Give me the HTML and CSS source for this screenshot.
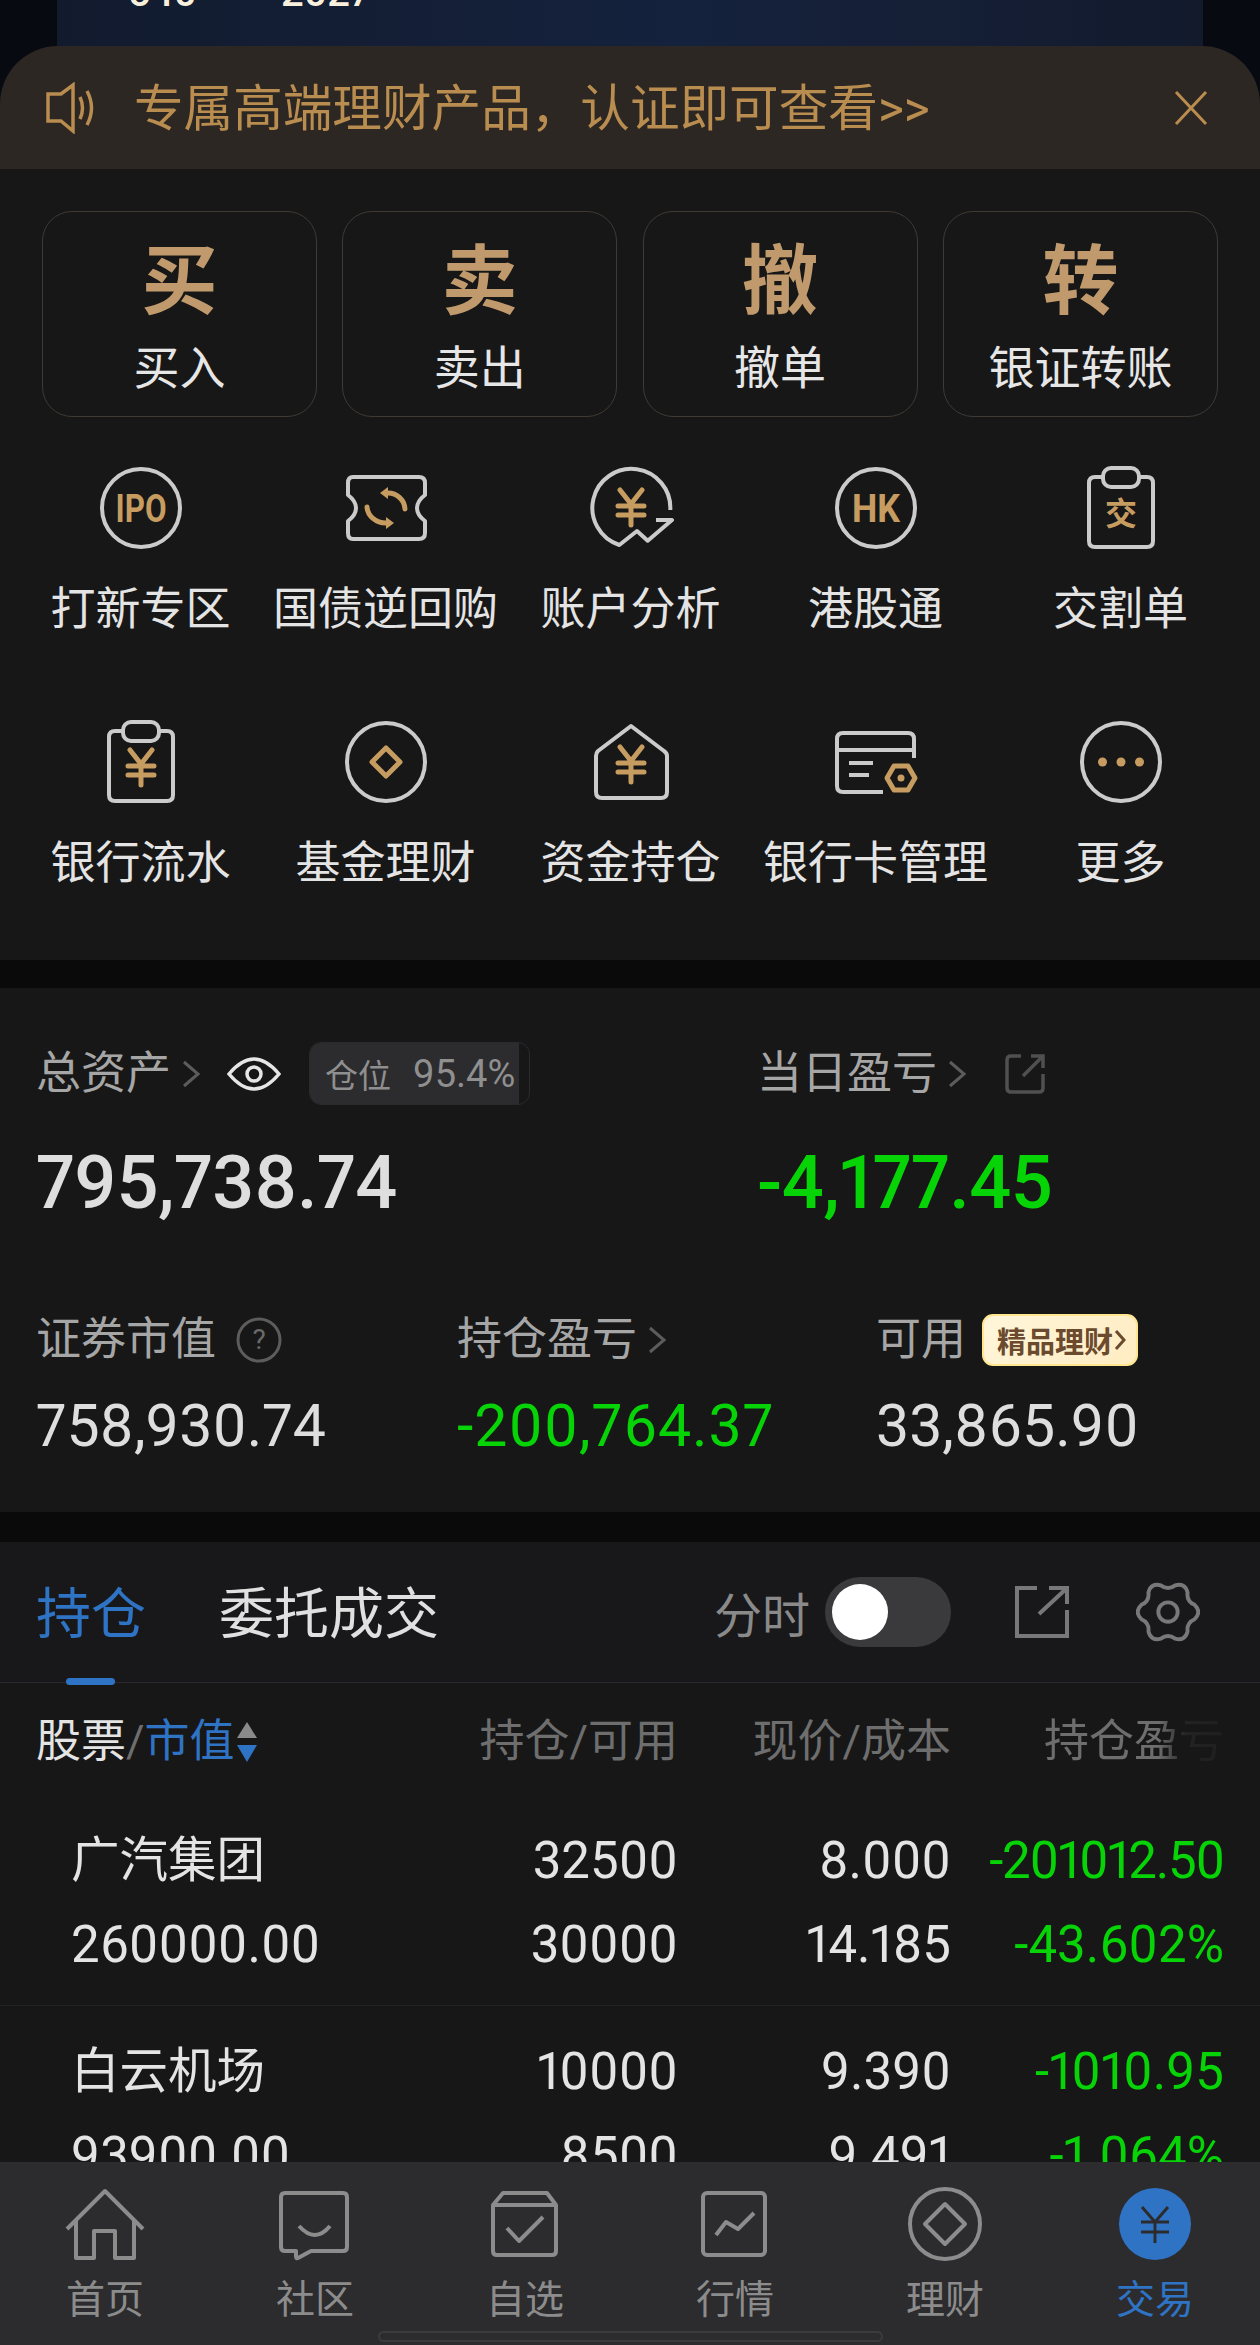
FILE: index.html
```html
<!DOCTYPE html>
<html lang="zh-CN">
<head>
    <meta charset="UTF-8">
    <meta name="viewport" content="width=device-width, initial-scale=1.0">
    <title>交易</title>
    <link rel="stylesheet" href="styles.css">
</head>
<body>
<div class="page">
    <!-- what is behind the sheet -->
    <div class="backdrop">
        <div class="backdrop-panel">
            <span class="backdrop-num">540</span>
            <span class="backdrop-num">2027</span>
        </div>
    </div>

    <div class="sheet">
        <div class="banner">
            <svg class="banner-speaker" viewBox="0 0 50 52"><path d="M2 12H15L27 3V49L15 39H2Z"/><path d="M34 15Q39 26 34 37"/><path d="M41 9Q50 26 41 43"/></svg>
            <span class="banner-text">专属高端理财产品，认证即可查看&gt;&gt;</span>
            <svg class="banner-close" viewBox="0 0 34 36"><path d="M2 2L32 34M32 2L2 34"/></svg>
        </div>

        <div class="trade-panel">
            <div class="action-row">
                <div class="action-card"><span class="action-glyph">买</span><span class="action-label">买入</span></div>
                <div class="action-card"><span class="action-glyph">卖</span><span class="action-label">卖出</span></div>
                <div class="action-card"><span class="action-glyph">撤</span><span class="action-label">撤单</span></div>
                <div class="action-card"><span class="action-glyph">转</span><span class="action-label">银证转账</span></div>
            </div>

            <div class="menu-grid">
                <div class="menu-item">
                    <svg class="menu-icon" viewBox="0 0 90 90"><circle class="line" cx="45" cy="45" r="39"/><text class="icon-text" x="45" y="59" textLength="51" lengthAdjust="spacingAndGlyphs">IPO</text></svg>
                    <span>打新专区</span>
                </div>
                <div class="menu-item">
                    <svg class="menu-icon" viewBox="0 0 90 90"><path class="line" d="M12 14H78Q84 14 84 20V32Q76 38 76 45T84 58V70Q84 76 78 76H12Q7 76 7 70V58Q15 52 15 45T7 32V20Q7 14 12 14Z"/><path class="gold" d="M47 30A17 17 0 0 1 64 46"/><path class="gold" d="M26 44A19 17 0 0 0 45 60"/><path class="gold-fill" d="M47 24V36L39 30ZM45 54V66L53 60Z"/></svg>
                    <span>国债逆回购</span>
                </div>
                <div class="menu-item">
                    <svg class="menu-icon" viewBox="0 0 90 90"><path class="line" d="M84.3 47A39 39 0 1 0 33.3 82L51 68L61.7 77.7L86 57H70"/><path class="gold" d="M34 27L45 41L56 27M45 41V62M32 43H58M32 52H58"/></svg>
                    <span>账户分析</span>
                </div>
                <div class="menu-item">
                    <svg class="menu-icon" viewBox="0 0 90 90"><circle class="line" cx="45" cy="45" r="39"/><text class="icon-text" x="45" y="59" textLength="48" lengthAdjust="spacingAndGlyphs">HK</text></svg>
                    <span>港股通</span>
                </div>
                <div class="menu-item">
                    <svg class="menu-icon" viewBox="0 0 90 90"><path class="line" d="M27 14H19Q13 14 13 20V78Q13 84 19 84H71Q77 84 77 78V20Q77 14 71 14H63"/><rect class="line" x="27" y="5" width="36" height="19" rx="8"/><text class="icon-text icon-cjk" x="45" y="62">交</text></svg>
                    <span>交割单</span>
                </div>
                <div class="menu-item">
                    <svg class="menu-icon" viewBox="0 0 90 90"><path class="line" d="M27 14H19Q13 14 13 20V78Q13 84 19 84H71Q77 84 77 78V20Q77 14 71 14H63"/><rect class="line" x="27" y="5" width="36" height="19" rx="8"/><path class="gold" d="M34 33L45 47L56 33M45 47V68M32 49H58M32 58H58"/></svg>
                    <span>银行流水</span>
                </div>
                <div class="menu-item">
                    <svg class="menu-icon" viewBox="0 0 90 90"><circle class="line" cx="45" cy="45" r="39"/><path class="gold" d="M45 31L59 45L45 59L31 45Z"/></svg>
                    <span>基金理财</span>
                </div>
                <div class="menu-item">
                    <svg class="menu-icon" viewBox="0 0 90 90"><path class="line" d="M45 9L12 34Q10 36 10 39V75Q10 81 16 81H75Q81 81 81 75V39Q81 36 78 34Z"/><path class="gold" d="M34 30L45 44L56 30M45 44V65M32 46H58M32 55H58"/></svg>
                    <span>资金持仓</span>
                </div>
                <div class="menu-item">
                    <svg class="menu-icon" viewBox="0 0 90 90"><path class="line" d="M83 41V22Q83 16 77 16H12Q6 16 6 22V69Q6 75 12 75H52M6 33H83M18 46H42M18 58H38"/><path class="gold" d="M63 49L77 49L84 61L77 73H63L56 61Z"/><circle class="gold-fill" cx="70" cy="61" r="3.5"/></svg>
                    <span>银行卡管理</span>
                </div>
                <div class="menu-item">
                    <svg class="menu-icon" viewBox="0 0 90 90"><circle class="line" cx="45" cy="45" r="39"/><circle class="gold-fill" cx="26.5" cy="45" r="4.5"/><circle class="gold-fill" cx="45" cy="45" r="4.5"/><circle class="gold-fill" cx="63.5" cy="45" r="4.5"/></svg>
                    <span>更多</span>
                </div>
            </div>
        </div>

        <div class="assets">
            <div class="assets-top">
                <div class="assets-total">
                    <div class="assets-head">
                        <span class="assets-label">总资产</span>
                        <svg class="chevron" viewBox="0 0 20 28"><path d="M3 2L17 14L3 26"/></svg>
                        <svg class="eye" viewBox="0 0 54 36"><path d="M2 18Q27 -12 52 18Q27 48 2 18Z"/><circle cx="27" cy="18" r="7"/></svg>
                        <div class="position-chip">
                            <div class="position-fill" style="width: 95.4%"></div>
                            <span class="position-name">仓位</span>
                            <span class="position-value">95.4%</span>
                        </div>
                    </div>
                    <div class="big-num">795,738.74</div>
                </div>
                <div class="assets-today">
                    <div class="assets-head">
                        <span class="assets-label">当日盈亏</span>
                        <svg class="chevron" viewBox="0 0 20 28"><path d="M3 2L17 14L3 26"/></svg>
                        <svg class="ext-icon" viewBox="0 0 40 40"><path d="M16 2H6Q2 2 2 6V34Q2 38 6 38H34Q38 38 38 34V20M18 22L38 2M26 2H38V14"/></svg>
                    </div>
                    <div class="big-num green">-4,177.45</div>
                </div>
            </div>
            <div class="assets-bottom">
                <div class="assets-cell cell-market">
                    <div class="assets-sub">
                        <span class="assets-label">证券市值</span>
                        <svg class="help" viewBox="0 0 46 46"><circle cx="23" cy="23" r="21"/><text x="23" y="32">?</text></svg>
                    </div>
                    <div class="mid-num">758,930.74</div>
                </div>
                <div class="assets-cell cell-profit">
                    <div class="assets-sub">
                        <span class="assets-label">持仓盈亏</span>
                        <svg class="chevron" viewBox="0 0 20 28"><path d="M3 2L17 14L3 26"/></svg>
                    </div>
                    <div class="mid-num green">-200,764.37</div>
                </div>
                <div class="assets-cell">
                    <div class="assets-sub">
                        <span class="assets-label">可用</span>
                        <span class="promo-badge">精品理财<svg viewBox="0 0 12 22"><path d="M2 2L10 11L2 20"/></svg></span>
                    </div>
                    <div class="mid-num">33,865.90</div>
                </div>
            </div>
        </div>

        <div class="holdings">
            <div class="tabs">
                <span class="tab tab-active">持仓</span>
                <span class="tab">委托成交</span>
                <div class="tabs-tools">
                    <span class="tool-label">分时</span>
                    <div class="switch"><div class="switch-knob"></div></div>
                    <svg class="tool-share" viewBox="0 0 54 52"><path d="M22 2H2V50H52V24M24 28L52 2M34 2H52V18"/></svg>
                    <svg class="tool-gear" viewBox="0 0 64 64"><path d="M59.5 39.4Q67 32 59.5 24.6Q51 21 52.2 11.8Q49.5 1.7 39.4 4.5Q32 10 24.6 4.5Q14.5 1.7 11.8 11.8Q13 21 4.5 24.6Q-3 32 4.5 39.4Q13 43 11.8 52.2Q14.5 62.3 24.6 59.5Q32 54 39.4 59.5Q49.5 62.3 52.2 52.2Q51 43 59.5 39.4Z"/><circle cx="32" cy="32" r="10"/></svg>
                </div>
            </div>

            <div class="table-head">
                <div class="head-stock">
                    <span class="head-white">股票</span><span class="head-slash">/</span><span class="head-blue">市值</span>
                    <span class="sort-arrows"><i class="sort-up"></i><i class="sort-down"></i></span>
                </div>
                <div class="head-col">持仓/可用</div>
                <div class="head-col">现价/成本</div>
                <div class="head-col head-fade">持仓盈亏</div>
            </div>

            <div class="stock-row">
                <div class="stock-name">广汽集团</div>
                <div>32500</div>
                <div>8.000</div>
                <div class="green num-tight">-201012.50</div>
                <div class="stock-value">260000.00</div>
                <div>30000</div>
                <div>14.185</div>
                <div class="green">-43.602%</div>
            </div>
            <div class="stock-row">
                <div class="stock-name">白云机场</div>
                <div>10000</div>
                <div>9.390</div>
                <div class="green">-1010.95</div>
                <div class="stock-value">93900.00</div>
                <div>8500</div>
                <div>9.491</div>
                <div class="green">-1.064%</div>
            </div>
        </div>

        <div class="bottom-nav">
            <div class="nav-items">
                <div class="nav-item">
                    <svg viewBox="0 0 90 80"><path d="M7 44L45 6L83 44M16 34V73H34V46H55V73H74V34"/></svg>
                    <span>首页</span>
                </div>
                <div class="nav-item">
                    <svg viewBox="0 0 90 80"><path d="M15 8H73Q77 8 77 12V62Q77 66 73 66H41L28 73Q26 74 26 71V66H15Q11 66 11 62V12Q11 8 15 8Z"/><path d="M29 41Q45 59 60 41"/></svg>
                    <span>社区</span>
                </div>
                <div class="nav-item">
                    <svg viewBox="0 0 90 80"><path d="M13 20L23 8H67L76 20M13 20H76V66Q76 70 72 70H17Q13 70 13 66Z"/><path d="M27 43L39 56L63 32"/></svg>
                    <span>自选</span>
                </div>
                <div class="nav-item">
                    <svg viewBox="0 0 90 80"><rect x="13" y="8" width="62" height="62" rx="4"/><path d="M26 50L36 37L48 44L64 28"/></svg>
                    <span>行情</span>
                </div>
                <div class="nav-item">
                    <svg viewBox="0 0 90 80"><circle cx="45" cy="39" r="35"/><path d="M45 19L65 39L45 59L25 39Z"/></svg>
                    <span>理财</span>
                </div>
                <div class="nav-item nav-active">
                    <svg viewBox="0 0 90 80"><circle class="nav-dot" cx="45" cy="39" r="36"/><path class="nav-yen" d="M32 22L45 37L58 22M45 37V58M31 37H59M31 47H59"/></svg>
                    <span>交易</span>
                </div>
            </div>
            <div class="home-bar"></div>
        </div>
    </div>
</div>
</body>
</html>
```

FILE: styles.css
```css
* {
    box-sizing: border-box;
}
html, body {
    margin: 0;
    padding: 0;
    background-color: #090a10;
}
body {
    font-family: "Roboto", "Noto Sans CJK SC", sans-serif;
    font-variant-numeric: proportional-nums;
    color: #e4e4e4;
}
svg {
    display: block;
    fill: none;
}
.page {
    width: 1260px;
    height: 2345px;
    display: flex;
    flex-direction: column;
    overflow: hidden;
}

/* backdrop */
.backdrop {
    height: 106px;
    margin-bottom: -60px;
    flex-shrink: 0;
    background-color: #080a12;
}
.backdrop-panel {
    height: 106px;
    margin: 0 57px;
    padding-left: 71px;
    display: flex;
    gap: 84px;
    overflow: hidden;
    background: linear-gradient(90deg, #121b2e 0%, #15223d 55%, #151f36 75%, #121a2c 100%);
}
.backdrop-num {
    margin-top: -27px;
    font-size: 40px;
    line-height: 40px;
    font-weight: 500;
    color: #f8efdc;
}

/* sheet */
.sheet {
    flex: 1;
    min-height: 0;
    display: flex;
    flex-direction: column;
    position: relative;
    border-radius: 58px 58px 0 0;
    overflow: hidden;
    background-color: #0a0a0a;
}
.banner {
    height: 123px;
    flex-shrink: 0;
    display: flex;
    align-items: center;
    padding: 0 52px 0 46px;
    background-color: #2c2723;
}
.banner-speaker {
    width: 50px;
    height: 52px;
    stroke: #b98c4f;
    stroke-width: 3.5;
}
.banner-text {
    margin-top: 2px;
    margin-left: 38px;
    font-size: 49.6px;
    line-height: 60px;
    color: #b98c4f;
}
.banner-close {
    width: 34px;
    height: 36px;
    margin-left: auto;
    stroke: #b98c4f;
    stroke-width: 3;
}

/* trade buttons and menu */
.trade-panel {
    flex-shrink: 0;
    height: 791px;
    padding-top: 42px;
    background-color: #171717;
}
.action-row {
    display: grid;
    grid-template-columns: repeat(4, 275px);
    column-gap: 25.3px;
    padding: 0 42px;
}
.action-card {
    height: 206px;
    display: flex;
    flex-direction: column;
    align-items: center;
    padding-top: 28px;
    border: 1px solid #3f3a34;
    border-radius: 30px;
}
.action-glyph {
    font-size: 76px;
    line-height: 84px;
    font-weight: 700;
    color: #c09a6c;
}
.action-label {
    margin-top: 19px;
    font-size: 46px;
    line-height: 50px;
    color: #e6e6e6;
}
.menu-grid {
    display: grid;
    grid-template-columns: repeat(5, 245px);
    row-gap: 82px;
    padding: 46px 0 0 18px;
}
.menu-item {
    display: flex;
    flex-direction: column;
    align-items: center;
    font-size: 45px;
    line-height: 50px;
    color: #e4e4e4;
    white-space: nowrap;
}
.menu-icon {
    width: 90px;
    height: 90px;
    margin-bottom: 32px;
}
.menu-icon .line {
    stroke: #cbcbcb;
    stroke-width: 4;
    stroke-linejoin: round;
}
.menu-icon .gold {
    stroke: #c69c60;
    stroke-width: 5;
    stroke-linejoin: round;
    stroke-linecap: round;
}
.menu-icon .gold-fill {
    fill: #c69c60;
}
.icon-text {
    fill: #c69c60;
    font-size: 38px;
    font-weight: 700;
    text-anchor: middle;
}
.icon-cjk {
    font-size: 32px;
}

/* assets */
.assets {
    flex-shrink: 0;
    height: 524px;
    margin-top: 28px;
    padding: 54px 0 0 36px;
    background-color: #171717;
}
.assets-top {
    display: flex;
}
.assets-total {
    width: 721px;
}
.assets-head {
    height: 63px;
    display: flex;
    align-items: center;
}
.assets-label {
    font-size: 45px;
    line-height: 56px;
    color: #a6a6a6;
    white-space: nowrap;
}
.chevron {
    width: 20px;
    height: 28px;
    margin-left: 10px;
    stroke: #5c5c5c;
    stroke-width: 3;
}
.eye {
    width: 54px;
    height: 36px;
    margin-left: 26px;
    stroke: #e6e6e6;
    stroke-width: 3.5;
}
.position-chip {
    position: relative;
    width: 221px;
    height: 63px;
    margin-left: 28px;
    padding-left: 15px;
    display: flex;
    align-items: center;
    border: 1px solid #2a2a2c;
    border-radius: 12px;
    overflow: hidden;
    font-size: 33px;
    color: #8f8f8f;
}
.position-fill {
    position: absolute;
    left: 0;
    top: 0;
    bottom: 0;
    background-color: #2c2c2f;
}
.position-name,
.position-value {
    position: relative;
}
.position-value {
    margin-left: 22px;
    font-size: 38px;
}
.ext-icon {
    width: 40px;
    height: 40px;
    margin-left: 38px;
    stroke: #505050;
    stroke-width: 3.5;
}
.big-num {
    margin-top: 38px;
    font-size: 74px;
    line-height: 80px;
    font-weight: 500;
    letter-spacing: -0.5px;
    color: #dedede;
}
.assets-bottom {
    display: flex;
    margin-top: 89px;
}
.assets-cell {
    flex-shrink: 0;
}
.cell-market {
    width: 421px;
}
.cell-profit {
    width: 419px;
}
.assets-sub {
    height: 56px;
    display: flex;
    align-items: center;
}
.help {
    width: 46px;
    height: 46px;
    margin-left: 20px;
    stroke: #5c5c5c;
    stroke-width: 3;
}
.help text {
    fill: #6a6a6a;
    stroke: none;
    font-size: 28px;
    text-anchor: middle;
}
.promo-badge {
    height: 52px;
    margin-left: 16px;
    padding: 0 10px 0 13px;
    display: flex;
    align-items: center;
    border: 2px solid #ffe68f;
    border-radius: 11px;
    background: linear-gradient(135deg, #fff6da, #ffecc2);
    font-size: 29px;
    font-weight: 700;
    color: #6b4a2e;
}
.promo-badge svg {
    width: 12px;
    height: 22px;
    margin-left: 1px;
    stroke: #6b4a2e;
    stroke-width: 3;
}
.mid-num {
    margin-top: 23px;
    font-size: 59px;
    line-height: 70px;
    color: #dedede;
    white-space: nowrap;
}
.big-num.green,
.mid-num.green,
.green {
    color: #06d406;
}
.mid-num.green {
    letter-spacing: 1px;
}

/* holdings */
.holdings {
    flex: 1;
    min-height: 0;
    margin-top: 30px;
    overflow: hidden;
    background-color: #171717;
}
.tabs {
    height: 141px;
    display: flex;
    align-items: center;
    padding: 0 60px 0 36px;
    border-bottom: 1px solid #2a2a2c;
    background-color: #18181a;
}
.tab {
    margin-top: 3px;
    font-size: 55px;
    line-height: 70px;
    color: #e0e0e0;
}
.tab-active {
    position: relative;
    margin-right: 73px;
    color: #2f73c4;
}
.tab-active::after {
    content: "";
    position: absolute;
    left: 30px;
    bottom: -36px;
    width: 49px;
    height: 7px;
    border-radius: 4px;
    background-color: #2f73c4;
}
.tabs-tools {
    margin-left: auto;
    display: flex;
    align-items: center;
}
.tool-label {
    font-size: 48px;
    color: #8a8a8a;
}
.switch {
    width: 126px;
    height: 70px;
    margin-left: 15px;
    padding: 7px;
    border-radius: 35px;
    background-color: #3a3a3d;
}
.switch-knob {
    width: 56px;
    height: 56px;
    border-radius: 50%;
    background-color: #fff;
}
.tool-share {
    width: 54px;
    height: 52px;
    margin-left: 64px;
    stroke: #787878;
    stroke-width: 4;
}
.tool-gear {
    width: 64px;
    height: 62px;
    margin-left: 67px;
    stroke: #787878;
    stroke-width: 4;
}
.table-head {
    height: 112px;
    display: grid;
    grid-template-columns: 1fr 240px 273px 273px;
    align-items: center;
    padding: 6px 36px 0;
    font-size: 45px;
    line-height: 60px;
}
.head-stock {
    display: flex;
    align-items: center;
}
.head-white {
    color: #e4e4e4;
}
.head-slash {
    color: #6e6e6e;
}
.head-blue {
    color: #2f73c4;
}
.sort-arrows {
    display: flex;
    flex-direction: column;
    gap: 7px;
    margin-left: 2px;
}
.sort-arrows i {
    display: block;
    width: 0;
    height: 0;
    border-left: 10px solid transparent;
    border-right: 10px solid transparent;
}
.sort-up {
    border-bottom: 16px solid #8a8a8a;
}
.sort-down {
    border-top: 17px solid #2f73c4;
}
.head-col {
    text-align: right;
    color: #6e6e6e;
    white-space: nowrap;
}
.head-fade {
    background: linear-gradient(90deg, #6e6e6e 76%, #232323 86%, #1f1f1f 100%);
    -webkit-background-clip: text;
    background-clip: text;
    color: transparent;
}
.stock-row {
    display: grid;
    grid-template-columns: 1fr 180px 273px 273px;
    padding: 24px 36px 18px 71px;
    border-bottom: 1px solid #232325;
    font-size: 51px;
    line-height: 84px;
    text-align: right;
    color: #e4e4e4;
}
.stock-name,
.stock-value {
    text-align: left;
}
.stock-name {
    font-size: 48.5px;
}
.num-tight {
    letter-spacing: -1.2px;
}

/* bottom nav */
.bottom-nav {
    height: 183px;
    flex-shrink: 0;
    padding-top: 23px;
    background-color: #2c2c2f;
}
.nav-items {
    display: grid;
    grid-template-columns: repeat(6, 210px);
}
.nav-item {
    display: flex;
    flex-direction: column;
    align-items: center;
    font-size: 39px;
    line-height: 44px;
    color: #8c8c8c;
}
.nav-item svg {
    width: 90px;
    height: 80px;
    margin-bottom: 13px;
    stroke: #8c8c8c;
    stroke-width: 4;
    stroke-linejoin: round;
}
.nav-active {
    color: #2f73c4;
}
.nav-item .nav-dot {
    fill: #2f73c4;
    stroke: none;
}
.nav-item .nav-yen {
    stroke: #2c2c2f;
    stroke-width: 3;
}
.home-bar {
    width: 505px;
    height: 11px;
    margin: 9px auto 0;
    border: 2px solid #3b3b3e;
    border-radius: 6px;
}
```
